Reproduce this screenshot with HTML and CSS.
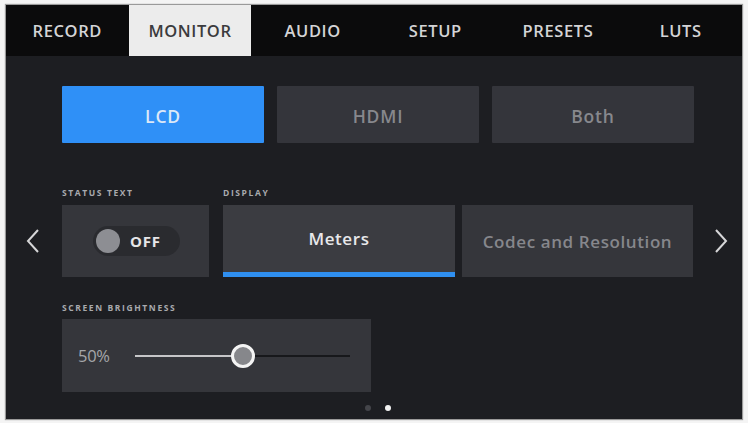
FILE: index.html
```html
<!DOCTYPE html>
<html>
<head>
<meta charset="utf-8">
<link rel="stylesheet" href="styles.css">
</head>
<body>
<div class="screen">
  <div class="tabs">
    <div class="tab">RECORD</div>
    <div class="tab active">MONITOR</div>
    <div class="tab">AUDIO</div>
    <div class="tab">SETUP</div>
    <div class="tab">PRESETS</div>
    <div class="tab">LUTS</div>
  </div>
  <div class="body">
    <div class="nav nav-left">
      <svg width="16" height="26" viewBox="0 0 16 26"><path d="M13 2 L3 13 L13 24" fill="none" stroke="#d6d6d8" stroke-width="2"/></svg>
    </div>
    <div class="main">
      <div class="segments">
        <div class="seg active">LCD</div>
        <div class="seg">HDMI</div>
        <div class="seg">Both</div>
      </div>
      <div class="row">
        <div class="field status">
          <div class="label">STATUS TEXT</div>
          <div class="box center">
            <div class="toggle"><span class="knob"></span><span class="toggle-text">OFF</span></div>
          </div>
        </div>
        <div class="field display">
          <div class="label">DISPLAY</div>
          <div class="options">
            <div class="box option selected">Meters</div>
            <div class="box option">Codec and Resolution</div>
          </div>
        </div>
      </div>
      <div class="field bright">
        <div class="label">SCREEN BRIGHTNESS</div>
        <div class="box slider-box">
          <span class="value">50%</span>
          <div class="slider">
            <div class="track-fill" style="width:50%"></div>
            <div class="thumb"></div>
          </div>
        </div>
      </div>
      <div class="dots"><span class="dot"></span><span class="dot on"></span></div>
    </div>
    <div class="nav nav-right">
      <svg width="16" height="26" viewBox="0 0 16 26"><path d="M3 2 L13 13 L3 24" fill="none" stroke="#d6d6d8" stroke-width="2"/></svg>
    </div>
  </div>
</div>
</body>
</html>
```
FILE: styles.css
```css
html, body { margin: 0; padding: 0; }
body {
  background: #f4f4f4;
  font-family: "Open Sans", "DejaVu Sans", sans-serif;
  width: 748px;
  height: 423px;
  overflow: hidden;
}
.screen {
  margin: 5px 0 0 6px;
  width: 736px;
  height: 414px;
  background: #1d1e22;
  display: flex;
  flex-direction: column;
  box-shadow: 0 0 1px 1px #9a9a9a;
}
.tabs {
  height: 51px;
  background: #0b0b0c;
  display: grid;
  grid-template-columns: repeat(6, 1fr);
}
.tab {
  display: flex;
  align-items: center;
  justify-content: center;
  color: #d4d4d6;
  font-size: 16.5px;
  font-weight: 600;
  letter-spacing: 0.6px;
  padding-bottom: 1px;
}
.tab.active {
  background: #ececec;
  color: #3b3b3d;
}
.body {
  flex: 1;
  display: flex;
}
.nav {
  box-sizing: border-box;
  flex-shrink: 0;
  display: flex;
  align-items: center;
  justify-content: center;
  padding-top: 6px;
}
.nav-left { width: 56px; padding-right: 2px; }
.nav-right { width: 48px; padding-left: 6px; }
.main {
  width: 632px;
  flex-shrink: 0;
  padding-top: 30px;
  display: flex;
  flex-direction: column;
}
.segments {
  display: grid;
  grid-template-columns: repeat(3, 1fr);
  gap: 13px;
  height: 57px;
}
.seg {
  background: #34353b;
  color: #87888d;
  font-size: 17.5px;
  font-weight: 600;
  letter-spacing: 0.8px;
  display: flex;
  align-items: center;
  justify-content: center;
  border-radius: 1px;
  padding-top: 2px;
}
.seg.active {
  background: #2f90f7;
  color: #dbe8f7;
}
.row {
  display: flex;
  gap: 14px;
  margin-top: 44px;
}
.field { display: flex; flex-direction: column; }
.label {
  height: 12px;
  line-height: 12px;
  font-size: 8.5px;
  font-weight: 700;
  letter-spacing: 1.6px;
  color: #a9aaae;
  margin-bottom: 6px;
  white-space: nowrap;
}
.box {
  background: #35363b;
  height: 72px;
}
.status { width: 147px; }
.display { width: 470px; }
.center {
  display: flex;
  align-items: center;
  justify-content: center;
}
.toggle {
  width: 87px;
  height: 30px;
  border-radius: 15px;
  background: #2a2b2f;
  display: flex;
  align-items: center;
  padding-left: 3px;
  box-sizing: border-box;
  margin-left: 2px;
}
.knob {
  width: 24px;
  height: 24px;
  border-radius: 50%;
  background: #8d8e93;
}
.toggle-text {
  margin-left: 10px;
  color: #e6e6e8;
  font-size: 15px;
  font-weight: 700;
  letter-spacing: 0.8px;
}
.options {
  display: grid;
  grid-template-columns: 232px 231px;
  gap: 7px;
}
.option {
  display: flex;
  align-items: center;
  justify-content: center;
  color: #86878c;
  font-size: 17px;
  font-weight: 600;
  letter-spacing: 0.6px;
  box-sizing: border-box;
  white-space: nowrap;
}
.option.selected {
  background: #3b3c41;
  color: #e8e8ea;
  border-bottom: 5px solid #2f8ff0;
  padding-top: 0;
}
.bright { margin-top: 25px; width: 309px; }
.bright .label { margin-bottom: 5px; }
.slider-box {
  height: 73px;
  display: flex;
  align-items: center;
  padding: 0 21px 0 16px;
}
.value {
  color: #a5a6aa;
  font-size: 16.5px;
  font-weight: 400;
  width: 57px;
  letter-spacing: -0.3px;
}
.slider {
  position: relative;
  flex: 1;
  height: 2px;
  background: #17181b;
}
.track-fill {
  height: 2px;
  background: #c6c6c8;
}
.thumb {
  position: absolute;
  left: 50%;
  top: 1px;
  width: 18px;
  height: 18px;
  margin: -12px 0 0 -12px;
  border: 3px solid #f4f4f4;
  border-radius: 50%;
  background: #86878b;
}
.dots {
  display: flex;
  justify-content: center;
  gap: 14px;
  margin-top: 13px;
}
.dot {
  width: 6px;
  height: 6px;
  border-radius: 50%;
  background: #44454a;
}
.dot.on { background: #f2f2f2; }
```
